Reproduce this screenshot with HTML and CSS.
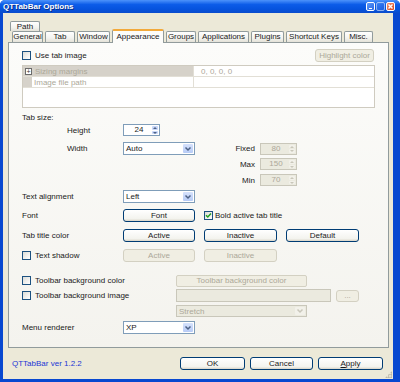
FILE: index.html
```html
<!DOCTYPE html>
<html lang="en">
<head>
  <meta charset="UTF-8">
  <title>QTTabBar Options</title>
  <link rel="stylesheet" href="styles.css">
</head>
<body>
  <div class="window">
    <div class="titlebar">
      <span class="title">QTTabBar Options</span>
      <div class="controls">
        <span class="ctl min"></span>
        <span class="ctl max"></span>
        <span class="ctl close">
          <svg width="9" height="9" viewBox="0 0 9 9"><path d="M2.5 2.5 L6.5 6.5 M6.5 2.5 L2.5 6.5" stroke="#fff" stroke-width="1.4"/></svg>
        </span>
      </div>
    </div>
    <div class="frame">
      <div class="client">
        <div class="tabs">
          <div class="tabrow back">
            <span class="tab w-path">Path</span>
          </div>
          <div class="tabrow front">
            <span class="tab w-general">General</span>
            <span class="tab w-tab">Tab</span>
            <span class="tab w-window">Window</span>
            <span class="tab sel w-appear">Appearance</span>
            <span class="tab w-groups">Groups</span>
            <span class="tab w-apps">Applications</span>
            <span class="tab w-plugins">Plugins</span>
            <span class="tab w-keys">Shortcut Keys</span>
            <span class="tab w-misc">Misc.</span>
          </div>
        </div>

        <div class="panel">
          <div class="row r-top">
            <span class="check"><span class="cb"></span>Use tab image</span>
            <span class="btn off hl">Highlight color</span>
          </div>

          <div class="pgrid">
            <div class="prow cat">
              <span class="pname"><span class="plus">+</span>Sizing margins</span>
              <span class="pval">0, 0, 0, 0</span>
            </div>
            <div class="prow">
              <span class="pname"><span class="gutter"></span>Image file path</span>
              <span class="pval"></span>
            </div>
          </div>

          <div class="row r-tabsize">Tab size:</div>

          <div class="row r-height">
            <span class="sublabel">Height</span>
            <span class="spin"><span class="val">24</span><span class="arrows"><span class="up"></span><span class="down"></span></span></span>
          </div>

          <div class="row r-width">
            <span class="sublabel">Width</span>
            <span class="combo"><span class="ctext">Auto</span><span class="drop"><svg width="8" height="6" viewBox="0 0 8 6"><path d="M1.5 1.5 L4 4 L6.5 1.5" fill="none" stroke="#4d6185" stroke-width="1.5"/></svg></span></span>
            <span class="lbl-r">Fixed</span>
            <span class="spin off"><span class="val">80</span><span class="arrows"><span class="up"></span><span class="down"></span></span></span>
          </div>

          <div class="row r-max">
            <span class="pad-r"></span>
            <span class="lbl-r">Max</span>
            <span class="spin off"><span class="val">150</span><span class="arrows"><span class="up"></span><span class="down"></span></span></span>
          </div>

          <div class="row r-min">
            <span class="pad-r"></span>
            <span class="lbl-r">Min</span>
            <span class="spin off"><span class="val">70</span><span class="arrows"><span class="up"></span><span class="down"></span></span></span>
          </div>

          <div class="row r-align">
            <span class="label">Text alignment</span>
            <span class="combo"><span class="ctext">Left</span><span class="drop"><svg width="8" height="6" viewBox="0 0 8 6"><path d="M1.5 1.5 L4 4 L6.5 1.5" fill="none" stroke="#4d6185" stroke-width="1.5"/></svg></span></span>
          </div>

          <div class="row r-font">
            <span class="label">Font</span>
            <span class="btn w72">Font</span>
            <span class="check bold-check"><span class="cb on"><svg width="7" height="7" viewBox="0 0 7 7"><path d="M1 3.2 L2.8 5 L6 1.6" fill="none" stroke="#21a121" stroke-width="1.5"/></svg></span>Bold active tab title</span>
          </div>

          <div class="row r-color">
            <span class="label">Tab title color</span>
            <span class="btn w72">Active</span>
            <span class="btn w73 gap9">Inactive</span>
            <span class="btn w73 gap9">Default</span>
          </div>

          <div class="row r-shadow">
            <span class="check label"><span class="cb"></span>Text shadow</span>
            <span class="btn off w72">Active</span>
            <span class="btn off w73 gap9">Inactive</span>
          </div>

          <div class="row r-tbcolor">
            <span class="check wide"><span class="cb"></span>Toolbar background color</span>
            <span class="btn off flat w131">Toolbar background color</span>
          </div>

          <div class="row r-tbimage">
            <span class="check wide"><span class="cb"></span>Toolbar background image</span>
            <span class="textbox off"></span>
            <span class="btn off dots">...</span>
          </div>

          <div class="row r-stretch">
            <span class="wide"></span>
            <span class="combo off stretch"><span class="ctext">Stretch</span><span class="drop"><svg width="8" height="6" viewBox="0 0 8 6"><path d="M1.5 1.5 L4 4 L6.5 1.5" fill="none" stroke="#c9c7ba" stroke-width="1.5"/></svg></span></span>
          </div>

          <div class="row r-menu">
            <span class="label">Menu renderer</span>
            <span class="combo"><span class="ctext">XP</span><span class="drop"><svg width="8" height="6" viewBox="0 0 8 6"><path d="M1.5 1.5 L4 4 L6.5 1.5" fill="none" stroke="#4d6185" stroke-width="1.5"/></svg></span></span>
          </div>
        </div>

        <div class="footer">
          <span class="version">QTTabBar ver 1.2.2</span>
          <span class="btn f-ok">OK</span>
          <span class="btn f-cancel">Cancel</span>
          <span class="btn f-apply"><u>A</u>pply</span>
          <span class="grip"></span>
        </div>
      </div>
    </div>
  </div>
</body>
</html>
```

FILE: styles.css
```css
*
{
  box-sizing:border-box;
}
body
{
  margin:0;
  background:#fff;
  font-family:"Liberation Sans", Arial, sans-serif;
  font-size:8px;
  color:#1a1a1a;
}
.window
{
  width:400px;
  height:382px;
  display:flex;
  flex-direction:column;
  background:#0848d0;
  border-radius:5px 5px 0 0;
  overflow:hidden;
}
.titlebar
{
  height:13px;
  display:flex;
  align-items:center;
  justify-content:space-between;
  padding:0 5px 0 3px;
  background:linear-gradient(#4d93fb, #0c5ce8 35%, #0653de 70%, #0a4ccc);
}
.title
{
  color:#fff;
  font-weight:bold;
  font-size:8px;
  text-shadow:1px 1px 0 #0b2e86;
}
.controls
{
  display:flex;
  gap:1px;
}
.ctl
{
  width:9px;
  height:9px;
  border:1px solid #fff;
  border-radius:2px;
  background:linear-gradient(135deg, #5d99f7, #2a68e6);
  position:relative;
}
.ctl.min::after
{
  content:"";
  position:absolute;
  left:2px;
  top:5px;
  width:3px;
  height:1px;
  background:#fff;
}
.ctl.max
{
  opacity:0.55;
}
.ctl.close
{
  background:linear-gradient(135deg, #f09475, #d9451c);
}
.ctl.close svg
{
  display:block;
  margin:-1px;
}
.frame
{
  flex:1;
  display:flex;
  padding:0 7px 3px 3px;
}
.client
{
  flex:1;
  display:flex;
  flex-direction:column;
  background:#ece9d8;
  position:relative;
}
.tabs
{
  padding:8px 0 0 7px;
  height:29px;
  display:flex;
  flex-direction:column;
}
.tabrow
{
  display:flex;
  align-items:flex-end;
}
.tabrow.back
{
  height:10px;
}
.tabrow.front
{
  height:11px;
  padding-left:2px;
  gap:2px;
}
.tab
{
  height:11px;
  border:1px solid #919b9c;
  border-bottom:none;
  border-radius:2px 2px 0 0;
  background:linear-gradient(#fff, #f3f3ef 60%, #e4e2d8);
  text-align:center;
  line-height:10px;
  font-size:8px;
  position:relative;
  z-index:1;
}
.tabrow.back .tab
{
  height:10px;
  line-height:9px;
}
.tab.sel
{
  height:14px;
  margin-bottom:-1px;
  border-top:2px solid #f2a93b;
  background:#fcfcfa;
  line-height:11px;
  z-index:2;
}
.w-path { width:30px; }
.w-general { width:31px; }
.w-tab { width:30px; }
.w-window { width:33px; }
.w-appear { width:52px; }
.w-groups { width:30px; }
.w-apps { width:51px; }
.w-plugins { width:33px; }
.w-keys { width:56px; }
.w-misc { width:29px; }
.panel
{
  margin-left:5px;
  width:381px;
  height:306px;
  border:1px solid #919b9c;
  background:linear-gradient(#fcfcfa, #f4f3ee);
  padding-left:13px;
  display:flex;
  flex-direction:column;
}
.row
{
  display:flex;
  align-items:center;
  height:13px;
  flex:none;
}
.r-top { margin-top:6px; justify-content:space-between; padding-right:14px; }
.pgrid { margin-top:3px; }
.r-tabsize { margin-top:4px; height:10px; }
.r-height { margin-top:2px; height:12px; }
.r-width { margin-top:6px; }
.r-max { margin-top:3px; height:12px; }
.r-min { margin-top:4px; height:12px; }
.r-align { margin-top:4px; }
.r-font { margin-top:6px; }
.r-color { margin-top:7px; }
.r-shadow { margin-top:7px; }
.r-tbcolor { margin-top:12px; }
.r-tbimage { margin-top:2px; }
.r-stretch { margin-top:3px; height:12px; }
.r-menu { margin-top:4px; }
.label
{
  width:101px;
  flex:none;
}
.sublabel
{
  margin-left:45px;
  width:56px;
  flex:none;
}
.pad-r
{
  width:173px;
  flex:none;
}
.lbl-r
{
  width:65px;
  padding-right:5px;
  text-align:right;
  flex:none;
}
.wide
{
  width:154px;
  flex:none;
}
.check
{
  display:flex;
  align-items:center;
}
.cb
{
  width:9px;
  height:9px;
  border:1px solid #1c5180;
  background:linear-gradient(135deg, #dcdcd7, #fff);
  margin-right:4px;
  flex:none;
  display:flex;
  align-items:center;
  justify-content:center;
}
.bold-check
{
  margin-left:9px;
}
.bold-check .cb
{
  margin-right:2px;
}
.btn
{
  height:13px;
  border:1px solid #003c74;
  border-radius:3px;
  background:linear-gradient(#fff, #f3f3ee 80%, #d8d3c6);
  display:flex;
  align-items:center;
  justify-content:center;
  flex:none;
}
.btn.off
{
  border-color:#d3d0c2;
  background:#f0eee3;
  color:#aca899;
}
.btn.flat
{
  border-radius:2px;
  height:12px;
}
.hl
{
  width:59px;
  color:#8d8a7e;
  border-color:#cfccbe;
  background:#eeece2;
}
.w72 { width:72px; }
.w73 { width:73px; }
.w131 { width:131px; }
.gap9 { margin-left:9px; }
.dots
{
  width:23px;
  height:12px;
  margin-left:5px;
}
.textbox
{
  width:155px;
  height:13px;
  border:1px solid #c9c7ba;
  background:#ebeadf;
  flex:none;
}
.pgrid
{
  width:353px;
  height:43px;
  border:1px solid #cfcbc0;
  background:#fff;
  color:#aca899;
  flex:none;
}
.prow
{
  height:11px;
  display:flex;
  border-bottom:1px solid #e2dfd6;
}
.prow .pname
{
  width:171px;
  display:flex;
  align-items:center;
  border-right:1px solid #e2dfd6;
}
.prow.cat .pname
{
  background:#d6d2ca;
}
.plus
{
  width:7px;
  height:7px;
  border:1px solid #6b6b6b;
  margin:0 3px 0 2px;
  font-size:7px;
  line-height:5px;
  text-align:center;
  color:#333;
  background:#fff;
}
.gutter
{
  width:9px;
  height:100%;
  background:#d6d2ca;
  margin-right:2px;
}
.pval
{
  padding-left:7px;
  display:flex;
  align-items:center;
}
.spin
{
  width:37px;
  height:12px;
  border:1px solid #7f9db9;
  background:#fff;
  display:flex;
  flex:none;
}
.spin .val
{
  flex:1;
  text-align:center;
  line-height:10px;
  padding-left:2px;
}
.arrows
{
  width:7px;
  display:flex;
  flex-direction:column;
  gap:1px;
  padding:1px 1px 1px 0;
}
.arrows span
{
  flex:1;
  background:#c7d6f8;
  border-radius:1px;
  position:relative;
}
.arrows .up::after,
.arrows .down::after
{
  content:"";
  position:absolute;
  left:1px;
  border-left:2px solid transparent;
  border-right:2px solid transparent;
}
.arrows .up::after
{
  top:1px;
  border-bottom:2px solid #4d6185;
}
.arrows .down::after
{
  top:1px;
  border-top:2px solid #4d6185;
}
.spin.off
{
  border-color:#c9c7ba;
  background:#ebeadf;
  color:#aca899;
}
.spin.off .arrows span
{
  background:#f2f1ea;
}
.spin.off .arrows span::after
{
  border-top-color:#c9c7ba;
  border-bottom-color:#c9c7ba;
}
.combo
{
  width:72px;
  height:13px;
  border:1px solid #7f9db9;
  background:#fff;
  display:flex;
  flex:none;
}
.combo .ctext
{
  flex:1;
  padding-left:2px;
  line-height:11px;
}
.drop
{
  width:10px;
  margin:1px;
  border-radius:1px;
  background:linear-gradient(#d6e2fc, #b7cbf6);
  display:flex;
  align-items:center;
  justify-content:center;
}
.combo.off
{
  border-color:#c9c7ba;
  background:#ebeadf;
  color:#aca899;
}
.combo.off .drop
{
  background:#f2f1ea;
}
.combo.stretch
{
  width:131px;
  height:12px;
}
.footer
{
  flex:1;
  display:flex;
  align-items:center;
  padding:0 10px 0 9px;
  gap:5px;
}
.version
{
  color:#2236d6;
  flex:1;
}
.f-ok { width:65px; }
.f-cancel { width:63px; }
.f-apply { width:65px; }
.grip
{
  position:absolute;
  right:1px;
  bottom:1px;
  width:7px;
  height:7px;
  background:radial-gradient(circle, #b0ad9e 0.8px, transparent 1px) 0 0 / 2.5px 2.5px;
  clip-path:polygon(100% 0, 100% 100%, 0 100%);
}
```
